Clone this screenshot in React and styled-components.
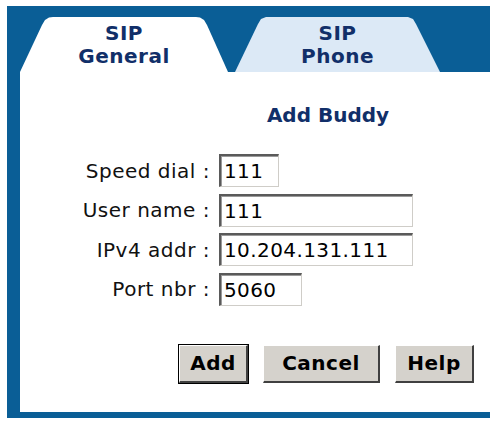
import React from 'react';
import styled, { createGlobalStyle } from 'styled-components';

const GlobalStyle = createGlobalStyle`
  body {
    margin: 0;
    background: #ffffff;
    font-family: "DejaVu Sans", Verdana, sans-serif;
  }
`;

const Frame = styled.div`
  margin: 6px 2px 0 7px;
  width: 483px;
  background: #0a5e96;
  padding: 11px 0 6px 13px;
  box-sizing: border-box;
`;

const TabRow = styled.div`
  display: flex;
  gap: 7px;
  height: 55px;
`;

const Tab = styled.div`
  width: ${p => p.$width}px;
  height: 55px;
  box-sizing: border-box;
  padding-top: 5px;
  background: ${p => (p.$active ? '#ffffff' : '#dce9f6')};
  clip-path: ${p => p.$clip};
  color: #112f69;
  font-weight: bold;
  font-size: 20px;
  line-height: 23px;
  letter-spacing: 0.5px;
  text-align: center;
`;

const TabLine = styled.div`
  height: 23px;
`;

const Content = styled.div`
  background: #ffffff;
  height: 340px;
  display: flex;
  flex-direction: column;
`;

const Form = styled.div`
  display: grid;
  grid-template-columns: 190px 218px;
  column-gap: 9px;
  row-gap: 6.5px;
  padding-top: 31px;
  align-items: center;
`;

const Heading = styled.div`
  grid-column: 2;
  text-align: center;
  color: #112f69;
  font-weight: bold;
  font-size: 20px;
  line-height: 24px;
  margin-bottom: 20.5px;
`;

const Label = styled.label`
  grid-column: 1;
  text-align: right;
  font-size: 20px;
  letter-spacing: 0.5px;
  color: #111111;
  white-space: nowrap;
`;

const Field = styled.input`
  grid-column: 2;
  width: ${p => p.$width}px;
  height: 33px;
  box-sizing: border-box;
  border-style: solid;
  border-width: 2px 1px 1px 2px;
  border-color: #5a5a5a #cfcdc8 #cfcdc8 #5a5a5a;
  box-shadow: inset 1px 1px 0 #9a9a9a;
  padding: 0 0 0 3px;
  font-family: "DejaVu Sans", Verdana, sans-serif;
  font-size: 20px;
  letter-spacing: 0.4px;
  color: #000000;
  background: #ffffff;
  outline: none;
`;

const Buttons = styled.div`
  display: flex;
  justify-content: flex-end;
  gap: 15px;
  padding-right: 16px;
  margin-top: 39px;
`;

const Button = styled.button`
  width: ${p => p.$width}px;
  height: 38px;
  box-sizing: border-box;
  padding: 0;
  background: #d5d2cc;
  font-family: "DejaVu Sans", Verdana, sans-serif;
  font-weight: bold;
  font-size: 20px;
  letter-spacing: 0.5px;
  color: #000000;
  border-style: solid;
  border-width: 1px 2px 2px 1px;
  border-color: #ffffff #404040 #404040 #ffffff;
  box-shadow: ${p => (p.$default ? '0 0 0 1px #000000' : 'none')};
`;

const fields = [
  { label: 'Speed dial :', value: '111', width: 60 },
  { label: 'User name :', value: '111', width: 194 },
  { label: 'IPv4 addr :', value: '10.204.131.111', width: 194 },
  { label: 'Port nbr :', value: '5060', width: 83 },
];

const activeClip =
  'polygon(0 55px, 22px 8px, 25px 3px, 29px 0.5px, 33px 0, 176px 0, 180px 0.5px, 184px 3px, 187px 8px, 208px 55px)';
const idleClip =
  'polygon(0 55px, 23px 7px, 26px 2px, 31px 0, 173px 0, 178px 2px, 181px 7px, 205px 55px)';

export default function App() {
  return (
    <>
      <GlobalStyle />
      <Frame>
        <TabRow>
          <Tab $active $width={208} $clip={activeClip}>
            <TabLine>SIP</TabLine>
            <TabLine>General</TabLine>
          </Tab>
          <Tab $width={205} $clip={idleClip}>
            <TabLine>SIP</TabLine>
            <TabLine>Phone</TabLine>
          </Tab>
        </TabRow>
        <Content>
          <Form>
            <Heading>Add Buddy</Heading>
            {fields.map(f => (
              <React.Fragment key={f.label}>
                <Label>{f.label}</Label>
                <Field $width={f.width} defaultValue={f.value} />
              </React.Fragment>
            ))}
          </Form>
          <Buttons>
            <Button $default $width={69}>Add</Button>
            <Button $width={117}>Cancel</Button>
            <Button $width={79}>Help</Button>
          </Buttons>
        </Content>
      </Frame>
    </>
  );
}
